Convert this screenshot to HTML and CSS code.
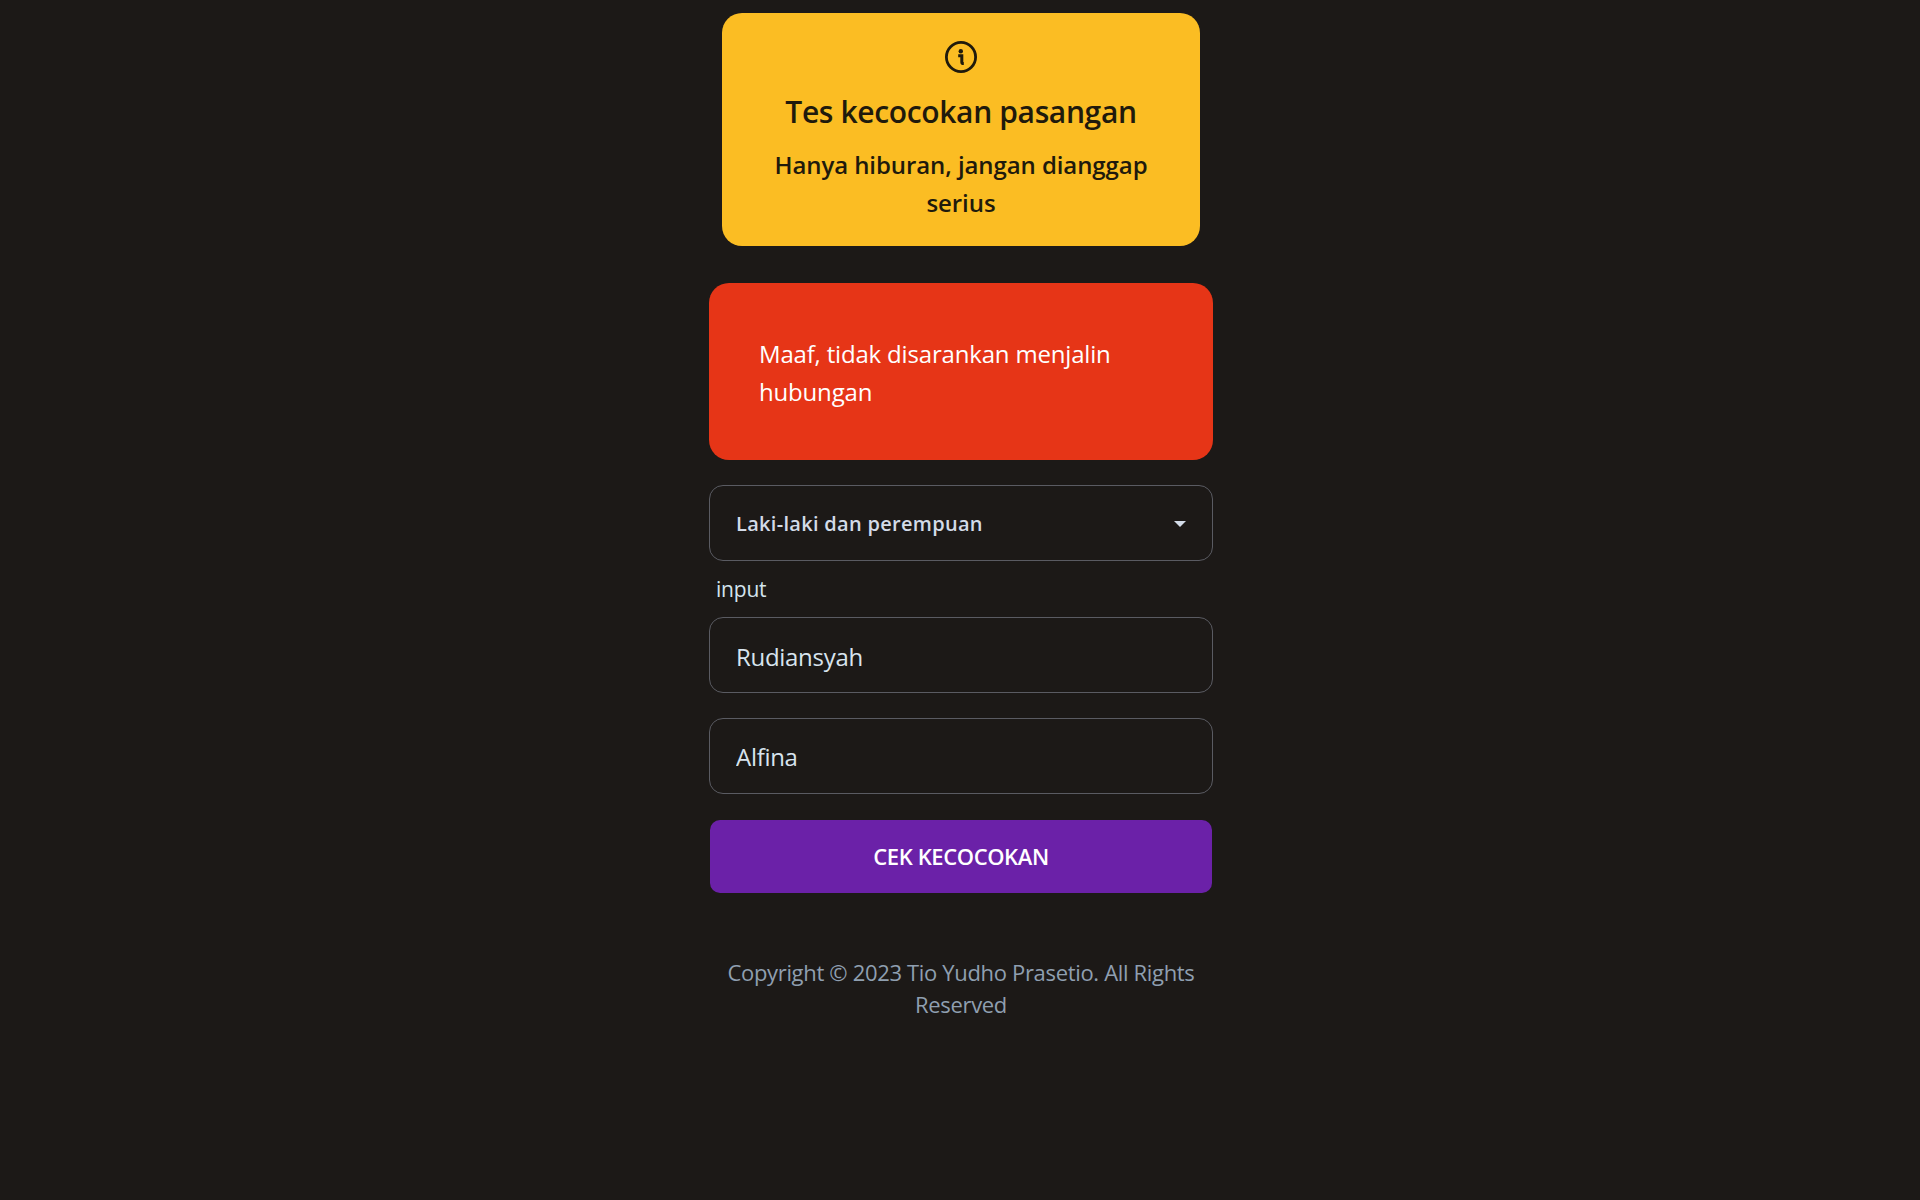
FILE: index.html
```html
<!DOCTYPE html>
<html lang="id">
<head>
<meta charset="utf-8">
<title>Tes kecocokan pasangan</title>
<link rel="stylesheet" href="styles.css">
</head>
<body>
<main class="page">
  <section class="intro">
    <svg class="intro-icon" viewBox="0 0 32 32" width="32" height="32" aria-hidden="true">
      <circle cx="16" cy="16" r="14.6" fill="none" stroke="currentColor" stroke-width="2.8"/>
      <circle cx="15.8" cy="10.2" r="2.2" fill="currentColor"/>
      <path d="M13.2 14.8h3.6v6.4q0 1.4 2 1.4" fill="none" stroke="currentColor" stroke-width="3"/>
    </svg>
    <h1 class="intro-title">Tes kecocokan pasangan</h1>
    <p class="intro-text">Hanya hiburan, jangan dianggap serius</p>
  </section>
  <form class="form">
    <div class="result">Maaf, tidak disarankan menjalin hubungan</div>
    <div class="select">
      <span>Laki-laki dan perempuan</span>
      <span class="caret"></span>
    </div>
    <label class="label" for="name-a">input</label>
    <input class="field" id="name-a" type="text" value="Rudiansyah">
    <input class="field field-second" type="text" value="Alfina">
    <button class="submit" type="button">CEK KECOCOKAN</button>
  </form>
  <footer class="footer">Copyright © 2023 Tio Yudho Prasetio. All Rights Reserved</footer>
</main>
</body>
</html>
```
FILE: styles.css
```css
* { box-sizing: border-box; }
html, body { margin: 0; padding: 0; }
body {
  min-height: 1200px;
  padding-left: 2px;
  background: #1c1917;
  color: #a6adbb;
  font-family: "Open Sans", "Noto Sans", sans-serif;
}
.page {
  width: 504px;
  margin: 0 auto;
  padding-top: 13px;
  display: flex;
  flex-direction: column;
  align-items: stretch;
}
.intro {
  width: 478px;
  height: 233px;
  margin: 0 auto;
  padding: 28px 32px 0;
  background: #fbbd23;
  color: #1f1a0c;
  border-radius: 20px;
  text-align: center;
  display: flex;
  flex-direction: column;
  align-items: center;
}
.intro-icon { display: block; flex: none; }
.intro-title {
  margin: 17px 0 0;
  font-size: 30px;
  line-height: 44px;
  font-weight: 600;
  letter-spacing: -0.36px;
  white-space: nowrap;
}
.intro-text {
  margin: 12px 0 0;
  font-size: 24px;
  line-height: 38px;
  font-weight: 600;
  letter-spacing: -0.08px;
}
.form { display: flex; flex-direction: column; margin-top: 37px; }
.result {
  height: 177px;
  padding: 52px 50px 0;
  background: #e63517;
  color: #fff;
  border-radius: 20px;
  font-size: 24px;
  line-height: 38px;
  letter-spacing: -0.18px;
}
.select {
  margin-top: 25px;
  height: 76px;
  padding: 1px 26px 0;
  border: 1px solid #5a5b62;
  border-radius: 14px;
  display: flex;
  align-items: center;
  justify-content: space-between;
  color: #d3dbe8;
  font-size: 20px;
  font-weight: 600;
  letter-spacing: 0.3px;
}
.caret {
  width: 0;
  height: 0;
  border-left: 6px solid transparent;
  border-right: 6px solid transparent;
  border-top: 6px solid #d3dbe8;
}
.label {
  margin-top: 12px;
  padding-left: 7px;
  font-size: 21px;
  line-height: 32px;
  color: #d3e4ee;
  letter-spacing: -0.2px;
}
.field {
  display: block;
  width: 100%;
  height: 76px;
  margin-top: 12px;
  padding: 2px 26px 0;
  border: 1px solid #5a5b62;
  border-radius: 14px;
  background: transparent;
  color: #d8e4ee;
  font-family: inherit;
  font-size: 24px;
  letter-spacing: -0.3px;
  outline: none;
}
.field-second { margin-top: 25px; padding-top: 0; }
.submit {
  width: 502px;
  height: 73px;
  margin: 26px auto 0;
  padding: 0 0 2px;
  border: 0;
  border-radius: 10px;
  background: #6b21a8;
  color: #fff;
  font-family: inherit;
  font-size: 22px;
  font-weight: 600;
  letter-spacing: -0.4px;
}
.footer {
  margin-top: 63px;
  padding: 0 10px;
  text-align: center;
  color: #8f9fb0;
  font-size: 22px;
  line-height: 32px;
  letter-spacing: -0.33px;
}
```
